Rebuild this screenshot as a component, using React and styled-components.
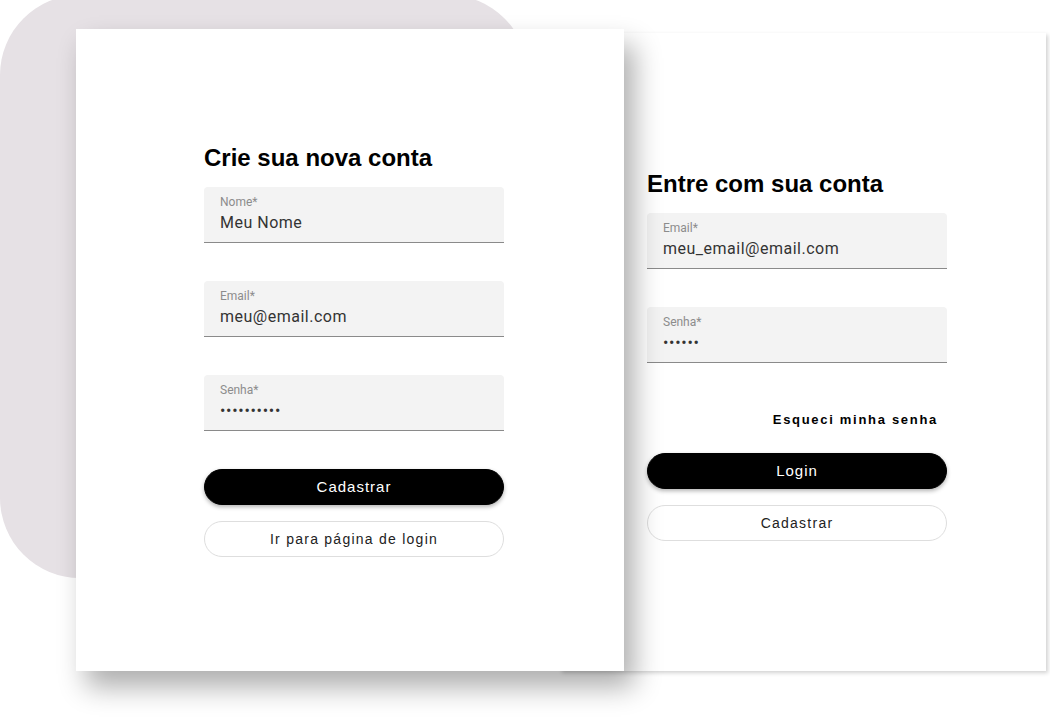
import styled, { createGlobalStyle } from "styled-components";

const GlobalStyle = createGlobalStyle`
  html, body {
    margin: 0;
    padding: 0;
    background: #ffffff;
  }
  * { box-sizing: border-box; }
`;

const Page = styled.div`
  position: relative;
  width: 1050px;
  height: 717px;
  overflow: hidden;
  background: #ffffff;
  font-family: "Liberation Sans", Arial, sans-serif;
`;

/* decorative blob sitting behind the cards */
const Blob = styled.div`
  position: absolute;
  left: 0;
  top: -5px;
  width: 528px;
  height: 583px;
  border-radius: 80px;
  background: #e6e1e5;
`;

const Stage = styled.div`
  position: relative;
  display: flex;
  align-items: flex-end;
  padding: 29px 0 0 76px;
`;

const Card = styled.div`
  position: relative;
  display: flex;
  flex-direction: column;
  justify-content: center;
  background: #ffffff;
  width: ${(p) => p.$w}px;
  height: ${(p) => p.$h}px;
  padding-left: ${(p) => p.$pl}px;
  padding-top: ${(p) => p.$pt || 0}px;
  z-index: ${(p) => (p.$front ? 2 : 1)};
  margin-left: ${(p) => (p.$front ? 0 : -64)}px;
  box-shadow: ${(p) =>
    p.$front
      ? "10px 16px 26px rgba(0, 0, 0, 0.32)"
      : "2px 2px 4px rgba(0, 0, 0, 0.18)"};
`;

const Form = styled.form`
  display: flex;
  flex-direction: column;
  width: 300px;
`;

const Title = styled.h2`
  margin: 0 0 15px;
  font-family: "Liberation Sans", Arial, sans-serif;
  font-size: 24px;
  line-height: 28px;
  font-weight: 700;
  color: #000;
`;

const Field = styled.label`
  display: flex;
  flex-direction: column;
  height: 56px;
  margin-bottom: ${(p) => (p.$last ? 0 : 38)}px;
  padding: 8px 16px 0;
  background: #f3f3f3;
  border-radius: 4px 4px 0 0;
  border-bottom: 1px solid #8a8a8a;
  font-family: Roboto, "Liberation Sans", sans-serif;
`;

const Label = styled.span`
  font-size: 12px;
  line-height: 14px;
  color: #8c8c8c;
`;

const Input = styled.input`
  border: 0;
  outline: 0;
  padding: 0;
  margin-top: 2px;
  background: transparent;
  font-family: Roboto, "Liberation Sans", sans-serif;
  font-size: 16px;
  line-height: 24px;
  height: 24px;
  color: #333;
  letter-spacing: ${(p) => (p.type === "password" ? "0.7px" : "0.5px")};
`;

const Forgot = styled.a`
  align-self: flex-end;
  margin: 49px 9px 25px 0;
  font-size: 13px;
  line-height: 16px;
  font-weight: 700;
  letter-spacing: 1.7px;
  color: #000;
  text-decoration: none;
  cursor: pointer;
`;

const Button = styled.button`
  height: 36px;
  width: 100%;
  margin-top: ${(p) => p.$mt || 0}px;
  border-radius: 18px;
  font-family: "Liberation Sans", Arial, sans-serif;
  font-size: ${(p) => (p.$primary ? 15 : 14)}px;
  letter-spacing: ${(p) => (p.$primary ? 1 : 1.25)}px;
  cursor: pointer;
  border: 1px solid ${(p) => (p.$primary ? "#000" : "#dedede")};
  background: ${(p) => (p.$primary ? "#000" : "#fff")};
  color: ${(p) => (p.$primary ? "#fff" : "#222")};
  box-shadow: ${(p) => (p.$primary ? "0 2px 4px rgba(0,0,0,0.3)" : "none")};
`;

function TextField({ label, value, type = "text", last }) {
  return (
    <Field $last={last}>
      <Label>{label}*</Label>
      <Input type={type} defaultValue={value} readOnly />
    </Field>
  );
}

export default function App() {
  return (
    <>
      <GlobalStyle />
      <Page>
        <Blob />
        <Stage>
          <Card $front $w={548} $h={642} $pl={128} $pt={0}>
            <Form onSubmit={(e) => e.preventDefault()}>
              <Title>Crie sua nova conta</Title>
              <TextField label="Nome" value="Meu Nome" />
              <TextField label="Email" value="meu@email.com" />
              <TextField label="Senha" value="1234567890" type="password" last />
              <Button $primary $mt={38} type="submit">
                Cadastrar
              </Button>
              <Button $mt={16} type="button">
                Ir para página de login
              </Button>
            </Form>
          </Card>
          <Card $w={486} $h={638} $pl={87} $pt={6}>
            <Form onSubmit={(e) => e.preventDefault()}>
              <Title>Entre com sua conta</Title>
              <TextField label="Email" value="meu_email@email.com" />
              <TextField label="Senha" value="123456" type="password" last />
              <Forgot>Esqueci minha senha</Forgot>
              <Button $primary type="submit">
                Login
              </Button>
              <Button $mt={16} type="button">
                Cadastrar
              </Button>
            </Form>
          </Card>
        </Stage>
      </Page>
    </>
  );
}
